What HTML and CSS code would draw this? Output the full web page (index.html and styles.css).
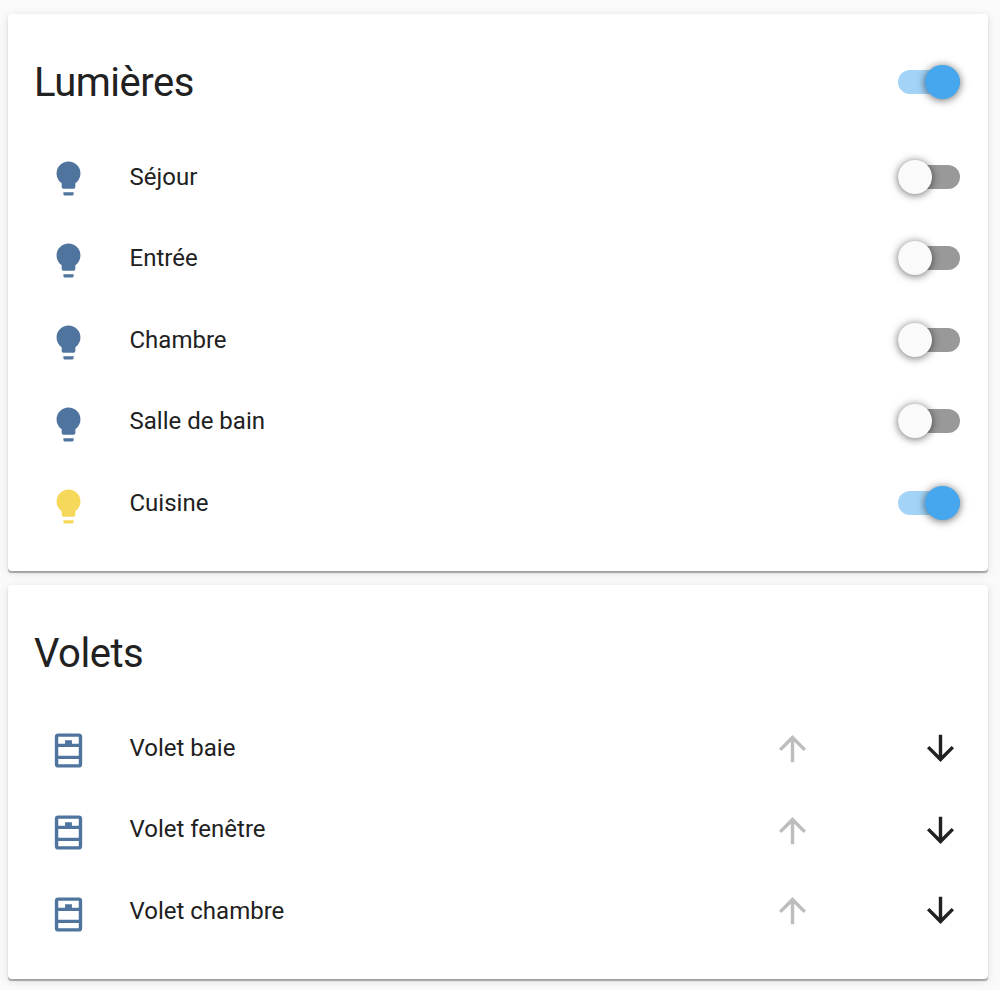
FILE: index.html
```html
<!DOCTYPE html>
<html lang="fr">
<head>
<meta charset="utf-8">
<title>Maison</title>
<link rel="stylesheet" href="styles.css">
</head>
<body>
<svg class="defs" aria-hidden="true">
  <symbol id="bulb" viewBox="0 0 24 24"><path d="M12,2A7,7 0 0,0 5,9C5,11.38 6.19,13.47 8,14.74V17A1,1 0 0,0 9,18H15A1,1 0 0,0 16,17V14.74C17.81,13.47 19,11.38 19,9A7,7 0 0,0 12,2M9,21A1,1 0 0,0 10,22H14A1,1 0 0,0 15,21V20H9V21Z"/></symbol>
  <symbol id="shutter" viewBox="0 0 24 24"><path fill-rule="evenodd" d="M6,2H18A2,2 0 0,1 20,4V20A2,2 0 0,1 18,22H6A2,2 0 0,1 4,20V4A2,2 0 0,1 6,2M6,4V8H10V6H14V8H18V4H6M6,10V15H18V10H6M6,17V20H18V17H6Z"/></symbol>
  <symbol id="up" viewBox="0 0 24 24"><path d="M13,20H11V8L5.5,13.5L4.08,12.08L12,4.16L19.92,12.08L18.5,13.5L13,8V20Z"/></symbol>
  <symbol id="down" viewBox="0 0 24 24"><path d="M11,4H13V16L18.5,10.5L19.92,11.92L12,19.84L4.08,11.92L5.5,10.5L11,16V4Z"/></symbol>
</svg>
<main class="column">
  <section class="card lights">
    <header class="head"><h1 class="title">Lumières</h1><span class="switch on"><i class="thumb"></i></span></header>
    <div class="rows">
      <div class="row"><svg class="icon"><use href="#bulb"/></svg><span class="name">Séjour</span><span class="switch"><i class="thumb"></i></span></div>
      <div class="row"><svg class="icon"><use href="#bulb"/></svg><span class="name">Entrée</span><span class="switch"><i class="thumb"></i></span></div>
      <div class="row"><svg class="icon"><use href="#bulb"/></svg><span class="name">Chambre</span><span class="switch"><i class="thumb"></i></span></div>
      <div class="row"><svg class="icon"><use href="#bulb"/></svg><span class="name">Salle de bain</span><span class="switch"><i class="thumb"></i></span></div>
      <div class="row"><svg class="icon lit"><use href="#bulb"/></svg><span class="name">Cuisine</span><span class="switch on"><i class="thumb"></i></span></div>
    </div>
  </section>
  <section class="card covers">
    <header class="head"><h1 class="title">Volets</h1></header>
    <div class="rows">
      <div class="row"><svg class="icon"><use href="#shutter"/></svg><span class="name">Volet baie</span><span class="actions"><svg class="arrow off"><use href="#up"/></svg><svg class="arrow"><use href="#down"/></svg></span></div>
      <div class="row"><svg class="icon"><use href="#shutter"/></svg><span class="name">Volet fenêtre</span><span class="actions"><svg class="arrow off"><use href="#up"/></svg><svg class="arrow"><use href="#down"/></svg></span></div>
      <div class="row"><svg class="icon"><use href="#shutter"/></svg><span class="name">Volet chambre</span><span class="actions"><svg class="arrow off"><use href="#up"/></svg><svg class="arrow"><use href="#down"/></svg></span></div>
    </div>
  </section>
</main>
</body>
</html>
```

FILE: styles.css
```css
* { box-sizing: border-box; }
html, body { margin: 0; }
body {
  height: 990px;
  overflow: hidden;
  background: #fafafa;
  color: #212121;
  font-family: Roboto, "Noto Sans", sans-serif;
}
.defs { display: none; }
.column {
  display: flex;
  flex-direction: column;
  gap: 14px;
  padding: 14px 12px 0 8px;
}
.card {
  background: #fff;
  border-radius: 4px;
  box-shadow: 0 2px 1px -0.5px rgba(0, 0, 0, .3), 0 2px 9px rgba(0, 0, 0, .12);
}
.lights { height: 557px; }
.covers { height: 394px; }
.head {
  display: flex;
  align-items: center;
  justify-content: space-between;
  height: 122px;
  padding: 14px 28px 0 26px;
}
.title {
  margin: 0;
  padding-top: 2px;
  font-size: 40px;
  font-weight: 400;
  line-height: 68px;
  letter-spacing: -.012em;
}
.row {
  display: flex;
  align-items: center;
  height: 81.5px;
  padding: 0 28px 0 40px;
}
.icon {
  flex: none;
  width: 41px;
  height: 41px;
  margin-top: 2.6px;
  fill: #4f749e;
}
.row:nth-child(2) .icon { margin-top: 3.6px; }
.row:nth-child(3) .icon { margin-top: 4.6px; }
.row:nth-child(4) .icon { margin-top: 5.6px; }
.row:nth-child(5) .icon { margin-top: 6.6px; }
.icon.lit { fill: #f6d85a; }
.covers .icon { margin-top: 4.6px; }
.covers .row:nth-child(2) .icon { margin-top: 5.6px; }
.covers .row:nth-child(3) .icon { margin-top: 6.6px; }
.name {
  flex: 1;
  margin-left: 40.5px;
  font-size: 24px;
  line-height: 34px;
}
.switch {
  display: flex;
  align-items: center;
  width: 62px;
  height: 24px;
  border-radius: 12px;
  background: #999;
}
.thumb {
  width: 34px;
  height: 34px;
  flex: none;
  border-radius: 50%;
  background: #fafafa;
  box-shadow: 0 1px 8px rgba(0, 0, 0, .6);
}
.switch.on { justify-content: flex-end; background: #a3d4f8; }
.switch.on .thumb { width: 35px; background: #47a7ee; }
.actions {
  display: flex;
  gap: 107px;
  margin-right: -1px;
  padding-top: 2px;
}
.row:nth-child(3) .actions { padding-top: 0; }
.arrow { width: 41px; height: 41px; fill: #212121; }
.arrow.off { fill: #bdbdbd; }
```
